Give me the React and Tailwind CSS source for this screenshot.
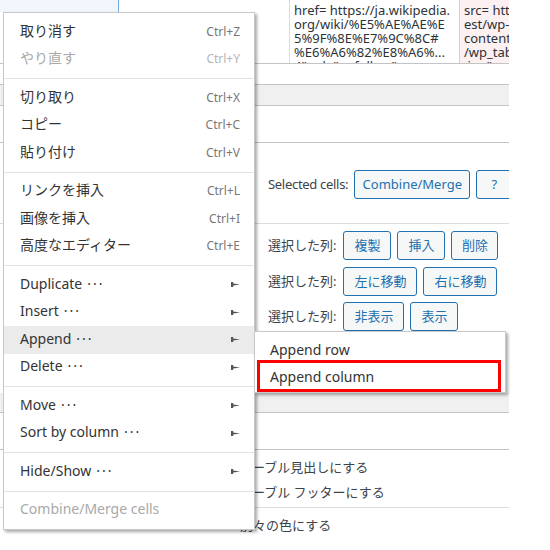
import React from "react";

const FONT = { fontFamily: '"Noto Sans", "Noto Sans CJK JP", sans-serif' };

function Arrow() {
  return (
    <svg width="9" height="5" viewBox="0 0 9 5" className="text-[#555]">
      <polygon points="0,0 2.2,0 2.2,1.6 9,2.5 2.2,3.4 2.2,5 0,5" fill="currentColor" />
    </svg>
  );
}

function Item({ label, dots, shortcut, sub, disabled, active }) {
  return (
    <div
      className={
        "flex h-[27.5px] items-center justify-between pl-[16px] pr-[14px] text-[14px] " +
        (active ? "bg-[#ebebeb] " : "") +
        (disabled ? "text-[#a9a9a9]" : "text-[#333]")
      }
    >
      <span className="-translate-y-[1px] whitespace-nowrap leading-none">
        {label}
        {dots && <span className="ml-[5px] tracking-[2px]">···</span>}
      </span>
      {shortcut && (
        <span className={"text-[12px] leading-none " + (disabled ? "text-[#b5b5b5]" : "text-[#777]")}>
          {shortcut}
        </span>
      )}
      {sub && <Arrow />}
    </div>
  );
}

function Sep() {
  return <div className="my-[5px] h-px bg-[#e3e3e3]" />;
}

function Btn({ children, className = "" }) {
  return (
    <div
      className={
        "flex h-[29px] shrink-0 items-center justify-center whitespace-nowrap rounded-[3px] border border-[#2271b1] bg-[#f6f7f7] text-[13px] leading-none text-[#2271b1] " +
        className
      }
    >
      {children}
    </div>
  );
}

function ColRow({ children }) {
  return (
    <div className="flex items-center gap-[6px] pl-[268px]">
      <span className="mr-[1px] whitespace-nowrap text-[13px] leading-none text-[#3c434a]">選択した列:</span>
      {children}
    </div>
  );
}

export default function App() {
  return (
    <div className="relative h-[550px] w-[550px] overflow-hidden bg-white" style={FONT}>
      {/* background page */}
      <div className="flex w-[509px] flex-col overflow-hidden">
        {/* top table row */}
        <div className="flex h-[64px] border-b border-[#c3c4c7]">
          <div className="h-[12px] w-[119px] shrink-0 border-r border-[#72aee6] bg-[#f0f6fc]" />
          <div className="w-[170px] shrink-0" />
          <div className="w-[170px] shrink-0 overflow-hidden border-l border-[#dcdcde] pl-[4px] text-[13px] leading-[14px] text-[#2c3338]">
            <div className="mt-[3px] whitespace-nowrap">
              <div>href= https://ja.wikipedia.</div>
              <div>org/wiki/%E5%AE%AE%E</div>
              <div>5%9F%8E%E7%9C%8C#</div>
              <div>%E6%A6%82%E8%A6%...</div>
              <div>4" rel="nofollow"</div>
            </div>
          </div>
          <div className="flex-1 overflow-hidden border-l border-[#f0c4c4] bg-[#fcf0f1] pl-[4px] text-[13px] leading-[14px] text-[#2c3338]">
            <div className="mt-[3px] whitespace-nowrap">
              <div>src= http</div>
              <div>est/wp-</div>
              <div>content</div>
              <div>/wp_table</div>
              <div>.jpg"</div>
            </div>
          </div>
        </div>
        <div className="h-[20px]" />
        <div className="h-[22px] border-y border-[#c3c4c7] bg-[#f0f0f1]" />
        <div className="h-[37px] border-b border-[#c3c4c7]" />
        {/* selected cells */}
        <div className="mt-[27px] flex items-center pl-[268px]">
          <span className="whitespace-nowrap text-[13px] leading-none tracking-[-0.3px] text-[#3c434a]">Selected cells:</span>
          <Btn className="ml-[6px] w-[116px]">Combine/Merge</Btn>
          <Btn className="ml-[6px] w-[36px]">?</Btn>
        </div>
        <div className="mt-[24px] h-px bg-[#dcdcde]" />
        <div className="mt-[7px] flex flex-col gap-[6.5px]">
          <ColRow>
            <Btn className="w-[48px]">複製</Btn>
            <Btn className="w-[48px]">挿入</Btn>
            <Btn className="w-[47px]">削除</Btn>
          </ColRow>
          <ColRow>
            <Btn className="w-[74px]">左に移動</Btn>
            <Btn className="w-[74px]">右に移動</Btn>
          </ColRow>
          <ColRow>
            <Btn className="w-[61px]">非表示</Btn>
            <Btn className="w-[48px]">表示</Btn>
          </ColRow>
        </div>
        <div className="mt-[62px] h-[20px] border-b border-[#c3c4c7] bg-[#f0f0f1]" />
        <div className="h-[37px] border-b border-[#c3c4c7]" />
        <div className="flex flex-col pl-[239px] text-[13px] text-[#3c434a]">
          <div className="flex h-[34px] items-center whitespace-nowrap leading-none">テーブル見出しにする</div>
          <div className="flex h-[16px] items-center whitespace-nowrap leading-none">テーブル フッターにする</div>
        </div>
        <div className="mt-[7px] h-px bg-[#dcdcde]" />
        <div className="flex h-[34px] items-center pl-[240px] text-[13px] leading-none text-[#3c434a]">
          <span className="whitespace-nowrap">別々の色にする</span>
        </div>
      </div>

      {/* main context menu */}
      <div className="absolute left-[3px] top-[12px] w-[252px] border border-[#c9c9c9] bg-white py-[5px] shadow-[2px_2px_3px_rgba(0,0,0,0.35)]">
        <Item label="取り消す" shortcut="Ctrl+Z" />
        <Item label="やり直す" shortcut="Ctrl+Y" disabled />
        <Sep />
        <Item label="切り取り" shortcut="Ctrl+X" />
        <Item label="コピー" shortcut="Ctrl+C" />
        <Item label="貼り付け" shortcut="Ctrl+V" />
        <Sep />
        <Item label="リンクを挿入" shortcut="Ctrl+L" />
        <Item label="画像を挿入" shortcut="Ctrl+I" />
        <Item label="高度なエディター" shortcut="Ctrl+E" />
        <Sep />
        <Item label="Duplicate" dots sub />
        <Item label="Insert" dots sub />
        <Item label="Append" dots sub active />
        <Item label="Delete" dots sub />
        <Sep />
        <Item label="Move" dots sub />
        <Item label="Sort by column" dots sub />
        <Sep />
        <Item label="Hide/Show" dots sub />
        <Sep />
        <Item label="Combine/Merge cells" disabled />
      </div>

      {/* submenu */}
      <div className="absolute left-[254px] top-[331px] w-[252px] border border-[#c9c9c9] bg-white pb-[1px] pt-[4px] shadow-[2px_2px_3px_rgba(0,0,0,0.35)]">
        <div className="flex h-[27.5px] items-center pl-[15px] text-[14px] leading-none text-[#333]">Append row</div>
        <div className="flex h-[27.5px] items-center pl-[15px] text-[14px] leading-none text-[#333]">Append column</div>
      </div>

      {/* red highlight annotation */}
      <div className="absolute left-[257px] top-[360px] h-[32px] w-[244px] border-[3px] border-[#ff0000]" />
    </div>
  );
}
